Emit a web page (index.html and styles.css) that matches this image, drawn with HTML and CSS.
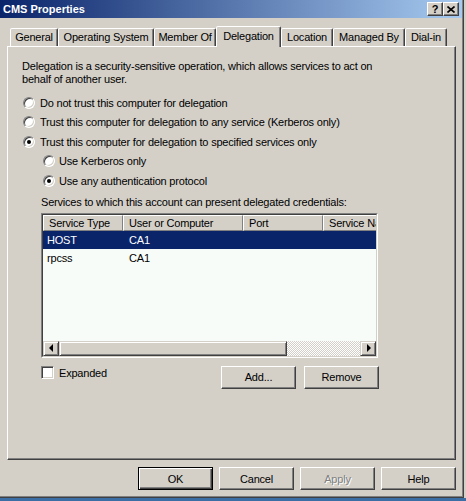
FILE: index.html
```html
<!DOCTYPE html>
<html>
<head>
<meta charset="utf-8">
<title>CMS Properties</title>
<link rel="stylesheet" href="styles.css">
</head>
<body>
<div class="window">
  <div class="frame">
    <div class="titlebar">
      <span class="title">CMS Properties</span>
      <div class="tbtns">
        <span class="tbtn help">?</span>
        <span class="tbtn close"><svg width="8" height="7" viewBox="0 0 8 7"><path d="M0.5 0.5 L7.5 6.5 M7.5 0.5 L0.5 6.5" stroke="#000" stroke-width="1.6"/></svg></span>
      </div>
    </div>
    <div class="tabs">
      <div class="tab t1">General</div>
      <div class="tab t2">Operating System</div>
      <div class="tab t3">Member Of</div>
      <div class="tab t4 active">Delegation</div>
      <div class="tab t5">Location</div>
      <div class="tab t6">Managed By</div>
      <div class="tab t7">Dial-in</div>
    </div>
    <div class="panel">
      <p class="desc">Delegation is a security-sensitive operation, which allows services to act on<br>behalf of another user.</p>
      <div class="radios">
        <div class="opt"><span class="radio"></span><span>Do not trust this computer for delegation</span></div>
        <div class="opt"><span class="radio"></span><span>Trust this computer for delegation to any service (Kerberos only)</span></div>
        <div class="opt"><span class="radio checked"></span><span>Trust this computer for delegation to specified services only</span></div>
        <div class="opt sub"><span class="radio"></span><span>Use Kerberos only</span></div>
        <div class="opt sub"><span class="radio checked"></span><span>Use any authentication protocol</span></div>
      </div>
      <div class="services-label">Services to which this account can present delegated credentials:</div>
      <div class="list">
        <div class="list-inner">
          <div class="header">
            <div class="hcell c1">Service Type</div>
            <div class="hcell c2">User or Computer</div>
            <div class="hcell c3">Port</div>
            <div class="hcell c4">Service Name</div>
          </div>
          <div class="row selected">
            <div class="cell c1">HOST</div>
            <div class="cell c2">CA1</div>
            <div class="cell c3"></div>
            <div class="cell c4"></div>
          </div>
          <div class="row">
            <div class="cell c1">rpcss</div>
            <div class="cell c2">CA1</div>
            <div class="cell c3"></div>
            <div class="cell c4"></div>
          </div>
          <div class="list-fill"></div>
          <div class="hscroll">
            <div class="sbtn"><span class="arrow left"></span></div>
            <div class="thumb"></div>
            <div class="track"></div>
            <div class="sbtn"><span class="arrow right"></span></div>
          </div>
        </div>
      </div>
      <div class="below">
        <label class="check"><span class="checkbox"></span><span>Expanded</span></label>
        <div class="list-btns">
          <button class="btn">Add...</button>
          <button class="btn">Remove</button>
        </div>
      </div>
    </div>
    <div class="actions">
      <button class="btn default">OK</button>
      <button class="btn">Cancel</button>
      <button class="btn disabled">Apply</button>
      <button class="btn">Help</button>
    </div>
  </div>
  <div class="desktop"></div>
</div>
</body>
</html>
```
FILE: styles.css
```css
* { box-sizing: border-box; }
html, body { margin: 0; padding: 0; }
body {
  font-family: "Liberation Sans", Arial, sans-serif;
  font-size: 11px;
  letter-spacing: -0.2px;
  color: #000;
  background: #d4d0c8;
}
.window {
  width: 466px;
  height: 501px;
  background: #d4d0c8;
  overflow: hidden;
  display: flex;
  flex-direction: column;
}
.frame {
  width: 464px;
  height: 498px;
  border-right: 1px solid #404040;
  border-bottom: 1px solid #404040;
  box-shadow: inset -1px -1px #808080;
  display: flex;
  flex-direction: column;
  flex-shrink: 0;
}
.desktop { height: 3px; background: #3a6ea5; }

/* title bar */
.titlebar {
  width: 462px;
  height: 18px;
  background: linear-gradient(to right, #0a246a, #a6caf0);
  display: flex;
  align-items: center;
  padding-left: 3px;
  flex-shrink: 0;
}
.title { color: #fff; font-weight: bold; font-size: 11px; letter-spacing: 0; }
.tbtns { margin-left: auto; margin-right: 3px; display: flex; }
.tbtn {
  width: 16px;
  height: 14px;
  background: #d4d0c8;
  border: 1px solid;
  border-color: #fff #404040 #404040 #fff;
  box-shadow: inset -1px -1px #808080;
  display: flex;
  align-items: center;
  justify-content: center;
  font-weight: bold;
  font-size: 11px;
  line-height: 12px;
  letter-spacing: 0;
}

/* tabs */
.tabs {
  margin-top: 8px;
  height: 20px;
  padding-left: 10px;
  display: flex;
  align-items: flex-end;
  flex-shrink: 0;
}
.tab {
  height: 18px;
  border: 1px solid;
  border-bottom: none;
  border-color: #fff #404040 transparent #fff;
  box-shadow: inset -1px 0 #808080;
  border-radius: 2px 2px 0 0;
  text-align: center;
  line-height: 17px;
  white-space: nowrap;
  background: #d4d0c8;
}
.tab.active {
  height: 21px;
  margin-bottom: -1px;
  position: relative;
  z-index: 1;
  line-height: 18px;
}
.t1 { width: 48px; }
.t2 { width: 96px; }
.t3 { width: 62px; }
.t4 { width: 65px; }
.t5 { width: 52px; }
.t6 { width: 72px; }
.t7 { width: 42px; }

/* panel */
.panel {
  margin-left: 7px;
  width: 449px;
  height: 414px;
  border: 1px solid;
  border-color: #fff #404040 #404040 #fff;
  box-shadow: inset -1px -1px #808080;
  flex-shrink: 0;
}
.desc {
  margin: 13px 0 0 14px;
  line-height: 13px;
}
.radios { margin-top: 7px; }
.opt {
  height: 19.5px;
  display: flex;
  align-items: center;
  padding-left: 15px;
  white-space: nowrap;
}
.opt.sub { padding-left: 35px; }
.radio {
  width: 12px;
  height: 12px;
  border-radius: 50%;
  border: 1px solid;
  border-color: #808080 #fff #fff #808080;
  box-shadow: inset 1px 1px #404040, inset -1px -1px #d4d0c8;
  background: #fff;
  margin-right: 5px;
  display: flex;
  align-items: center;
  justify-content: center;
  flex-shrink: 0;
}
.opt.sub .radio { margin-right: 4px; }
.radio.checked::after {
  content: "";
  width: 4px;
  height: 4px;
  border-radius: 50%;
  background: #000;
}
.services-label {
  margin: 5px 0 0 33px;
  line-height: 13px;
}

/* list view */
.list {
  margin: 4px 0 0 33px;
  width: 337px;
  height: 145px;
  border: 1px solid;
  border-color: #808080 #fff #fff #808080;
}
.list-inner {
  height: 100%;
  border: 1px solid;
  border-color: #404040 #d4d0c8 #d4d0c8 #404040;
  background: #f8fcf8;
  overflow: hidden;
  display: flex;
  flex-direction: column;
}
.header, .row { display: flex; flex-shrink: 0; }
.header { height: 16px; }
.hcell {
  border: 1px solid;
  border-color: #fff #808080 #808080 #fff;
  background: #d4d0c8;
  padding-left: 5px;
  line-height: 14px;
  white-space: nowrap;
  overflow: hidden;
  flex-shrink: 0;
}
.c1 { width: 80px; }
.c2 { width: 120px; }
.c3 { width: 80px; }
.c4 { width: 90px; }
.row { height: 18px; }
.cell {
  flex-shrink: 0;
  padding-left: 4px;
  line-height: 18px;
  white-space: nowrap;
}
.cell.c2 { padding-left: 6px; }
.row.selected { background: #0a246a; color: #fff; }
.list-fill { flex: 1; }
.hscroll { height: 15px; display: flex; flex-shrink: 0; }
.sbtn, .thumb {
  background: #d4d0c8;
  border: 1px solid;
  border-color: #d4d0c8 #404040 #404040 #d4d0c8;
  box-shadow: inset 1px 1px #fff, inset -1px -1px #808080;
  flex-shrink: 0;
}
.sbtn {
  width: 16px;
  display: flex;
  align-items: center;
  justify-content: center;
}
.thumb { width: 228px; }
.track {
  flex: 1;
  background-color: #fff;
  background-image: repeating-conic-gradient(#d4d0c8 0 25%, #fff 0 50%);
  background-size: 2px 2px;
}
.arrow { width: 0; height: 0; border-top: 4px solid transparent; border-bottom: 4px solid transparent; }
.arrow.left { border-right: 4px solid #000; margin-right: 1px; }
.arrow.right { border-left: 4px solid #000; margin-left: 1px; }

/* below list */
.below {
  margin: 8px 0 0 33px;
  width: 338px;
  height: 23px;
  display: flex;
}
.check {
  display: flex;
  align-items: center;
  height: 14px;
  margin-top: 0;
}
.checkbox {
  width: 13px;
  height: 13px;
  border: 1px solid;
  border-color: #808080 #fff #fff #808080;
  box-shadow: inset 1px 1px #404040, inset -1px -1px #d4d0c8;
  background: #fff;
  margin-right: 5px;
}
.list-btns { margin-left: auto; display: flex; gap: 8px; }

/* buttons */
.btn {
  width: 75px;
  height: 23px;
  padding: 0;
  margin: 0;
  font-family: inherit;
  font-size: 11px;
  letter-spacing: -0.2px;
  color: #000;
  background: #d4d0c8;
  border: 1px solid;
  border-color: #fff #404040 #404040 #fff;
  box-shadow: inset -1px -1px #808080;
  border-radius: 0;
}
.btn.default {
  border-color: #000;
  box-shadow: inset 1px 1px #fff, inset -1px -1px #404040, inset -2px -2px #808080;
}
.btn.disabled { color: #808080; text-shadow: 1px 1px #fff; }
.actions {
  margin-top: 7px;
  display: flex;
  justify-content: flex-end;
  gap: 6px;
  padding-right: 7px;
}
```
